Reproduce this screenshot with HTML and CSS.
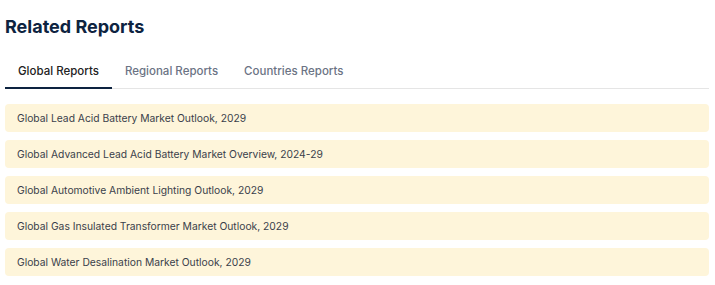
FILE: index.html
```html
<!DOCTYPE html>
<html lang="en">
<head>
    <meta charset="UTF-8">
    <meta name="viewport" content="width=device-width, initial-scale=1.0">
    <title>Related Reports</title>
    <link rel="stylesheet" href="styles.css">
</head>
<body>
    <section class="related">
        <h2 class="related-title">Related Reports</h2>
        <ul class="tabs">
            <li><a href="#" class="active">Global Reports</a></li>
            <li><a href="#">Regional Reports</a></li>
            <li><a href="#">Countries Reports</a></li>
        </ul>
        <ul class="report-list">
            <li><a href="#">Global Lead Acid Battery Market Outlook, 2029</a></li>
            <li><a href="#">Global Advanced Lead Acid Battery Market Overview, 2024-29</a></li>
            <li><a href="#">Global Automotive Ambient Lighting Outlook, 2029</a></li>
            <li><a href="#">Global Gas Insulated Transformer Market Outlook, 2029</a></li>
            <li><a href="#">Global Water Desalination Market Outlook, 2029</a></li>
        </ul>
    </section>
</body>
</html>
```

FILE: styles.css
```css
* {
    box-sizing: border-box;
    margin: 0;
    padding: 0;
}
body {
    font-family: Inter, 'Noto Sans', Arial, sans-serif;
    background-color: #fff;
    color: #333;
}
.related {
    width: 704px;
    margin-left: 5px;
    padding-top: 15px;
}
.related-title {
    font-size: 18px;
    font-weight: 700;
    line-height: 24px;
    color: #0d2340;
}
.tabs {
    list-style-type: none;
    display: flex;
    border-bottom: 1px solid #e5e5e5;
    margin-top: 19px;
}
.tabs li a {
    display: block;
    padding: 6px 13px 8px;
    font-size: 11.5px;
    font-weight: 500;
    line-height: 15px;
    color: #6b7384;
    text-decoration: none;
    border-bottom: 2px solid transparent;
    margin-bottom: -1px;
}
.tabs li a.active {
    color: #222;
    border-bottom-color: #0d2340;
}
.report-list {
    list-style-type: none;
    display: flex;
    flex-direction: column;
    gap: 8px;
    margin-top: 15px;
}
.report-list li a {
    display: block;
    background-color: #fef5da;
    border-radius: 4px;
    padding: 7px 12px;
    font-size: 10.3px;
    line-height: 14px;
    color: #3a3f4a;
    text-decoration: none;
}
```
